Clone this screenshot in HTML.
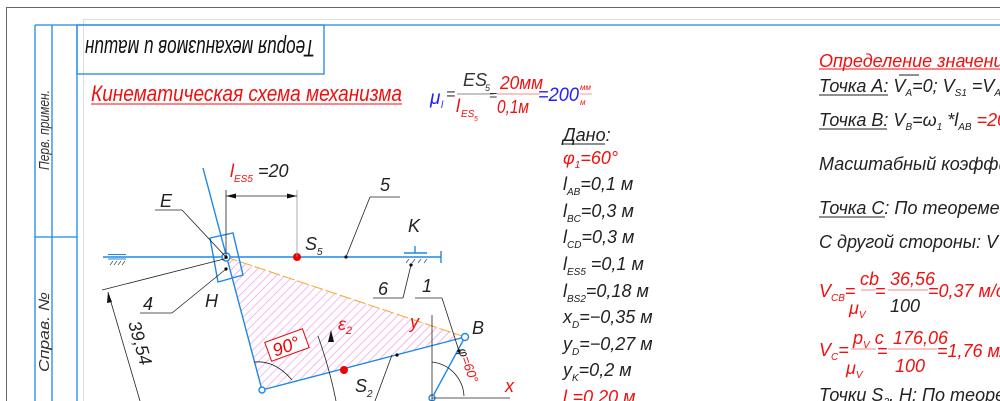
<!DOCTYPE html>
<html><head><meta charset="utf-8"><style>
html,body{margin:0;padding:0;background:#fff;width:1000px;height:401px;overflow:hidden}
svg{display:block}
text{font-family:"Liberation Sans","DejaVu Sans",sans-serif;font-style:italic}
</style></head><body>
<svg width="1000" height="401" viewBox="0 0 1000 401" xmlns="http://www.w3.org/2000/svg">
<defs>
<pattern id="h" width="6" height="6" patternUnits="userSpaceOnUse" patternTransform="rotate(45)">
<line x1="0" y1="0" x2="0" y2="6" stroke="#f08ef0" stroke-width="1.3"/>
</pattern>
</defs>
<line x1="6" y1="7.5" x2="1000" y2="7.5" stroke="#666" stroke-width="1"/>
<line x1="6.5" y1="7" x2="6.5" y2="401" stroke="#666" stroke-width="1"/>
<line x1="83" y1="19.5" x2="1000" y2="19.5" stroke="#ddd" stroke-width="1"/>
<line x1="83.5" y1="20" x2="83.5" y2="401" stroke="#ddd" stroke-width="1"/>
<g stroke="#1e88e5" stroke-width="1.3" fill="none">
<line x1="35" y1="25" x2="1000" y2="25"/>
<line x1="35" y1="25" x2="35" y2="401"/>
<line x1="52" y1="25" x2="52" y2="401"/>
<line x1="77" y1="25" x2="77" y2="401"/>
<line x1="35" y1="237" x2="77" y2="237"/>
<rect x="77" y="25" width="247" height="49"/>
</g>
<text transform="translate(49,170) rotate(-90)" font-size="15" fill="#333" textLength="80" lengthAdjust="spacingAndGlyphs">Перв. примен.</text>
<text transform="translate(49,372) rotate(-90)" font-size="15" fill="#333" textLength="80" lengthAdjust="spacingAndGlyphs">Справ. №</text>
<text transform="translate(315,40) rotate(180)" font-size="24" fill="#111" textLength="230" lengthAdjust="spacingAndGlyphs">Теория механизмов и машин</text>

<text x="91" y="101" font-size="22" fill="#f01010" textLength="311" lengthAdjust="spacingAndGlyphs">Кинематическая схема механизма</text>
<line x1="91" y1="104" x2="402" y2="104" stroke="#f01010" stroke-width="1"/>
<text x="430" y="104" font-size="19" fill="#2020ff">μ</text>
<text x="441" y="108" font-size="10" fill="#2020ff">l</text>
<text x="446" y="99" font-size="16" fill="#333">=</text>
<text x="463" y="86" font-size="18" fill="#333">ES</text>
<text x="485" y="91" font-size="9" fill="#333">5</text>
<line x1="457" y1="94" x2="494" y2="94" stroke="#888" stroke-width="1"/>
<text x="456" y="112" font-size="18" fill="#f01010">l</text>
<text x="461" y="117" font-size="10" fill="#f01010">ES</text>
<text x="474" y="121" font-size="7" fill="#f01010">5</text>
<text x="489" y="100" font-size="14" fill="#333">=</text>
<text x="500" y="89" font-size="18" fill="#f01010" textLength="43" lengthAdjust="spacingAndGlyphs">20мм</text>
<line x1="497" y1="94" x2="540" y2="94" stroke="#f08888" stroke-width="1"/>
<text x="497" y="113" font-size="18" fill="#f01010" textLength="32" lengthAdjust="spacingAndGlyphs">0,1м</text>
<text x="538" y="101" font-size="19" fill="#2020ff" textLength="41" lengthAdjust="spacingAndGlyphs">=200</text>
<text x="580" y="90" font-size="8" fill="#f01010">мм</text>
<line x1="580" y1="94" x2="592" y2="94" stroke="#f08888" stroke-width="0.8"/>
<text x="580" y="105" font-size="8" fill="#f01010">м</text>

<g font-size="18" fill="#222">
<text x="563" y="141">Дано:</text>
<text x="563" y="164" fill="#f01010">φ<tspan font-size="10" dy="4">1</tspan><tspan dy="-4">=60°</tspan></text>
<text x="563" y="190">l<tspan font-size="10" dy="5">AB</tspan><tspan dy="-5">=0,1 м</tspan></text>
<text x="563" y="217">l<tspan font-size="10" dy="5">BC</tspan><tspan dy="-5">=0,3 м</tspan></text>
<text x="563" y="243">l<tspan font-size="10" dy="5">CD</tspan><tspan dy="-5">=0,3 м</tspan></text>
<text x="563" y="270">l<tspan font-size="10" dy="5">ES5</tspan><tspan dy="-5"> =0,1 м</tspan></text>
<text x="563" y="297">l<tspan font-size="10" dy="5">BS2</tspan><tspan dy="-5">=0,18 м</tspan></text>
<text x="563" y="323">x<tspan font-size="10" dy="5">D</tspan><tspan dy="-5">=−0,35 м</tspan></text>
<text x="563" y="350">y<tspan font-size="10" dy="5">D</tspan><tspan dy="-5">=−0,27 м</tspan></text>
<text x="563" y="376">y<tspan font-size="10" dy="5">K</tspan><tspan dy="-5">=0,2 м</tspan></text>
<text x="563" y="403" fill="#f01010">l<tspan font-size="10" dy="5">..</tspan><tspan dy="-5">=0,20 м</tspan></text>
</g>
<line x1="563" y1="144" x2="605" y2="144" stroke="#222" stroke-width="1"/>

<g font-size="18" fill="#222">
<text x="819" y="67" fill="#f01010">Определение значений</text>
<text x="819" y="92">Точка А: V<tspan font-size="10" dy="4">A</tspan><tspan dy="-4">=0;  V</tspan><tspan font-size="10" dy="4">S1</tspan><tspan dy="-4"> =V</tspan><tspan font-size="10" dy="4">A</tspan></text>
<text x="819" y="126">Точка В: V<tspan font-size="10" dy="4">B</tspan><tspan dy="-4">=ω</tspan><tspan font-size="10" dy="4">1</tspan><tspan dy="-4"> *l</tspan><tspan font-size="10" dy="4">AB</tspan><tspan dy="-4" fill="#f01010"> =20</tspan></text>
<text x="819" y="170">Масштабный коэффициент</text>
<text x="819" y="214">Точка С: По теореме о</text>
<text x="819" y="248">С другой стороны: V</text>
<text x="819" y="297" fill="#f01010">V<tspan font-size="10" dy="4">CB</tspan><tspan dy="-4">=</tspan></text>
<text x="860" y="285" fill="#f01010">cb</text>
<text x="849" y="314" fill="#f01010">μ<tspan font-size="10" dy="4">V</tspan></text>
<text x="875" y="297" fill="#f01010">=</text>
<text x="890" y="285" fill="#f01010">36,56</text>
<text x="890" y="312" fill="#222">100</text>
<text x="928" y="297" fill="#f01010">=0,37 м/с</text>
<text x="819" y="356" fill="#f01010">V<tspan font-size="10" dy="4">C</tspan><tspan dy="-4">=</tspan></text>
<text x="853" y="344" fill="#f01010">p<tspan font-size="10" dy="4">V</tspan><tspan dy="-4"> c</tspan></text>
<text x="846" y="374" fill="#f01010">μ<tspan font-size="10" dy="4">V</tspan></text>
<text x="877" y="357" fill="#f01010">=</text>
<text x="893" y="344" fill="#f01010">176,06</text>
<text x="895" y="372" fill="#f01010">100</text>
<text x="937" y="357" fill="#f01010">=1,76 м/с</text>
<text x="819" y="401">Точки S<tspan font-size="10" dy="4">2</tspan><tspan dy="-4">, H: По теореме</tspan></text>
</g>
<g stroke="#888" stroke-width="1">
<line x1="819" y1="69" x2="1000" y2="69" stroke="#f01010"/>
<line x1="819" y1="95" x2="888" y2="95" stroke="#222"/>
<line x1="819" y1="129" x2="887" y2="129" stroke="#222"/>
<line x1="819" y1="217" x2="885" y2="217" stroke="#222"/>
<line x1="861" y1="290" x2="876" y2="290" stroke="#f08888"/>
<line x1="888" y1="290" x2="928" y2="290" stroke="#f08888"/>
<line x1="851" y1="349" x2="876" y2="349" stroke="#f08888"/>
<line x1="888" y1="349" x2="937" y2="349" stroke="#f08888"/>
<line x1="899" y1="75" x2="919" y2="75" stroke="#222"/>
</g>

<polygon points="226,257 465,337 262,390" fill="url(#h)"/>
<line x1="226" y1="257" x2="465" y2="337" stroke="#f5a623" stroke-width="1" stroke-dasharray="12,3"/>
<g stroke="#1e88e5" stroke-width="1.4" fill="none">
<line x1="103" y1="257" x2="441" y2="257"/>
<line x1="441" y1="251" x2="441" y2="263"/>
<line x1="203" y1="168" x2="262" y2="390"/>
<line x1="262" y1="390" x2="465" y2="337"/>
<line x1="432" y1="398" x2="465" y2="337"/>
<polygon points="210,238 233,233 243,275 218,282"/>
<line x1="108" y1="254.5" x2="126" y2="254.5" stroke-width="1"/><line x1="108" y1="259" x2="126" y2="259" stroke-width="1"/>
<line x1="404" y1="253" x2="427" y2="253"/><line x1="415" y1="246" x2="415" y2="253"/>
<circle cx="226" cy="257" r="4" fill="#fff"/>
<circle cx="262" cy="390" r="3" fill="#fff"/>
<circle cx="465" cy="337" r="3.5" fill="#fff"/>
<circle cx="432" cy="398" r="3" fill="#fff"/>
</g>
<g stroke="#555" stroke-width="0.8">
<line x1="110" y1="265" x2="113" y2="261"/><line x1="114" y1="265" x2="117" y2="261"/><line x1="118" y1="265" x2="121" y2="261"/><line x1="122" y1="265" x2="125" y2="261"/>
<line x1="406" y1="263" x2="409" y2="259"/><line x1="412" y1="263" x2="415" y2="259"/><line x1="418" y1="263" x2="421" y2="259"/><line x1="424" y1="263" x2="427" y2="259"/>
</g>
<circle cx="226" cy="257" r="1.6" fill="#000"/>
<circle cx="226" cy="269" r="1.6" fill="#000"/>
<circle cx="297" cy="257" r="4" fill="#e00"/>
<circle cx="346" cy="257" r="1.6" fill="#000"/>
<circle cx="411" cy="265" r="1.6" fill="#000"/>
<circle cx="344" cy="370" r="4" fill="#e00"/>
<circle cx="397" cy="355" r="1.6" fill="#000"/>
<circle cx="459" cy="351" r="1.6" fill="#000"/>

<g stroke="#222" stroke-width="0.8" fill="none">
<line x1="226" y1="190" x2="226" y2="257"/>
<line x1="297" y1="190" x2="297" y2="257" stroke="#999"/>
<line x1="226" y1="196" x2="297" y2="196"/>
<line x1="346" y1="257" x2="370" y2="197"/><line x1="370" y1="197" x2="400" y2="197"/>
<line x1="155" y1="210" x2="182" y2="210"/><line x1="182" y1="210" x2="225" y2="256"/>
<line x1="140" y1="313" x2="172" y2="313"/><line x1="172" y1="313" x2="226" y2="269"/>
<line x1="373" y1="298" x2="403" y2="298"/><line x1="403" y1="298" x2="411" y2="265"/>
<line x1="415" y1="298" x2="442" y2="298"/><line x1="442" y1="298" x2="459" y2="351"/>
<line x1="102" y1="290" x2="228" y2="258"/>
<line x1="108" y1="292" x2="140" y2="401"/>
<line x1="432" y1="315" x2="432" y2="401"/>
<line x1="432" y1="398" x2="510" y2="398"/>
<path d="M432,362 A36,36 0 0 1 464,396"/>
<path d="M318,336 Q330,370 336,401"/>
<path d="M254,362 Q275,360 292,380"/>
<line x1="392" y1="355" x2="375" y2="401"/>
</g>
<g fill="#111">
<polygon points="226,196 236,193.5 236,198.5"/>
<polygon points="297,196 287,193.5 287,198.5"/>
<polygon points="108,292 107,303 112,302"/>
<polygon points="331,330 328,342 334,342"/>
</g>
<g font-size="18" fill="#222">
<text x="230" y="177" fill="#f01010">l<tspan font-size="10" dy="5">ES5</tspan></text>
<text x="258" y="177">=20</text>
<text x="380" y="191">5</text>
<text x="160" y="207">E</text>
<text x="408" y="232">K</text>
<text x="305" y="250">S<tspan font-size="10" dy="5">5</tspan></text>
<text x="378" y="295">6</text>
<text x="422" y="292">1</text>
<text x="143" y="310">4</text>
<text x="205" y="307">H</text>
<text x="338" y="330" fill="#f01010">ε<tspan font-size="11" dy="4">2</tspan></text>
<text x="410" y="328" fill="#f01010">y</text>
<text x="472" y="334">B</text>
<text x="355" y="392">S<tspan font-size="10" dy="5">2</tspan></text>
<text x="505" y="392" fill="#f01010">x</text>
<text transform="translate(128,323) rotate(74)">39,54</text>
<text transform="translate(458,350) rotate(70)" font-size="13"><tspan>φ</tspan><tspan fill="#f01010">=60°</tspan></text>
</g>
<g transform="translate(287,345) rotate(-20)">
<rect x="-20" y="-10" width="40" height="20" fill="#fff" stroke="#e00" stroke-width="1"/>
<text x="-15" y="7" font-size="18" fill="#e00">90°</text>
</g>
</svg>
</body></html>
